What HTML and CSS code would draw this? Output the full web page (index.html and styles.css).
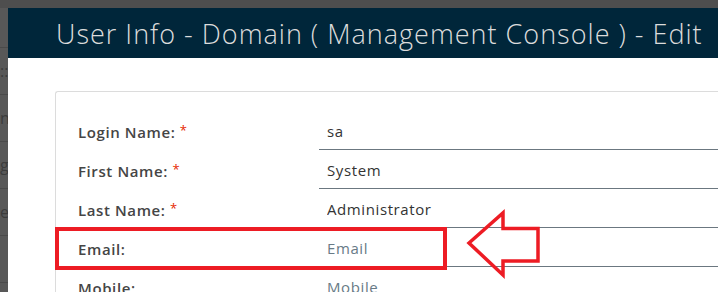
FILE: index.html
```html
<!DOCTYPE html>
<html lang="en">
<head>
    <meta charset="UTF-8">
    <meta name="viewport" content="width=device-width, initial-scale=1.0">
    <title>User Info - Edit</title>
    <link rel="stylesheet" href="styles.css">
</head>
<body>
    <div class="screen">
        <div class="behind">
            <div class="behind-row"></div>
            <div class="behind-row"><span>::</span></div>
            <div class="behind-row"><span>ne</span></div>
            <div class="behind-row"><span>g</span></div>
            <div class="behind-row"><span>e</span></div>
            <div class="behind-row"></div>
        </div>

        <section class="modal">
            <header class="modal-header">
                <h1>User Info - Domain ( Management Console ) - Edit</h1>
            </header>
            <div class="modal-body">
                <form class="card">
                    <div class="row">
                        <label for="login">Login Name: <span class="req">*</span></label>
                        <input type="text" id="login" value="sa">
                    </div>
                    <div class="row">
                        <label for="first">First Name: <span class="req">*</span></label>
                        <input type="text" id="first" value="System">
                    </div>
                    <div class="row">
                        <label for="last">Last Name: <span class="req">*</span></label>
                        <input type="text" id="last" value="Administrator">
                    </div>
                    <div class="row">
                        <label for="email">Email:</label>
                        <input type="text" id="email" placeholder="Email">
                    </div>
                    <div class="row">
                        <label for="mobile">Mobile:</label>
                        <input type="text" id="mobile" placeholder="Mobile">
                    </div>
                </form>
            </div>
        </section>
    </div>

    <!-- annotation drawn over the screenshot -->
    <div class="callout-box"></div>
    <svg class="callout-arrow" width="90" height="80" viewBox="0 0 90 80">
        <polygon points="9,38 43,8 43,23.5 78,23.5 78,56 43,56 43,70" fill="none" stroke="#ed1c24" stroke-width="3.5" stroke-linejoin="miter"/>
    </svg>
</body>
</html>
```

FILE: styles.css
```css
body {
    margin: 0;
    height: 292px;
    overflow: hidden;
    background-color: #4e4e4e;
    font-family: "Open Sans", "Noto Sans", sans-serif;
}

.screen {
    display: flex;
    padding-top: 8px;
    height: 284px;
}

.behind {
    width: 8px;
    flex-shrink: 0;
    background-color: #585858;
    overflow: hidden;
}

.behind-row {
    height: 46px;
    border-bottom: 1px solid #4a4a4a;
    color: #3c3c3c;
    font-size: 16px;
    line-height: 46px;
    white-space: nowrap;
}

.behind-row:first-child {
    height: 39px;
}

.modal {
    flex: 1;
    min-width: 0;
    background-color: #fff;
}

.modal-header {
    height: 50px;
    background-color: #00263a;
    display: flex;
    align-items: center;
    padding-left: 48px;
}

.modal-header h1 {
    margin: 0;
    font-size: 27px;
    font-weight: 300;
    letter-spacing: 1px;
    color: #dcdcdc;
    white-space: nowrap;
}

.modal-body {
    padding: 33px 0 0 47px;
}

.card {
    border: 1px solid #dcdcdc;
    border-right: none;
    border-radius: 3px 0 0 0;
    padding: 20px 0 0 22px;
    height: 300px;
}

.row {
    display: flex;
    align-items: center;
    height: 39px;
}

.row label {
    width: 241px;
    flex-shrink: 0;
    font-size: 15px;
    font-weight: 600;
    letter-spacing: 0.6px;
    color: #454545;
}

.req {
    color: #e62700;
    font-size: 13px;
    font-weight: 400;
    letter-spacing: 0;
    vertical-align: 3px;
}

.row input {
    flex: 1;
    height: 36px;
    box-sizing: border-box;
    border: none;
    border-bottom: 1px solid #6b7780;
    padding: 0 8px;
    font-family: "Open Sans", "Noto Sans", sans-serif;
    font-size: 15px;
    letter-spacing: 0.6px;
    color: #333;
    outline: none;
}

.row input::placeholder {
    color: #687a86;
}

.callout-box {
    position: absolute;
    left: 55px;
    top: 227px;
    width: 392px;
    height: 43px;
    box-sizing: border-box;
    border: 4px solid #ed1c24;
}

.callout-arrow {
    position: absolute;
    left: 460px;
    top: 205px;
}
```
